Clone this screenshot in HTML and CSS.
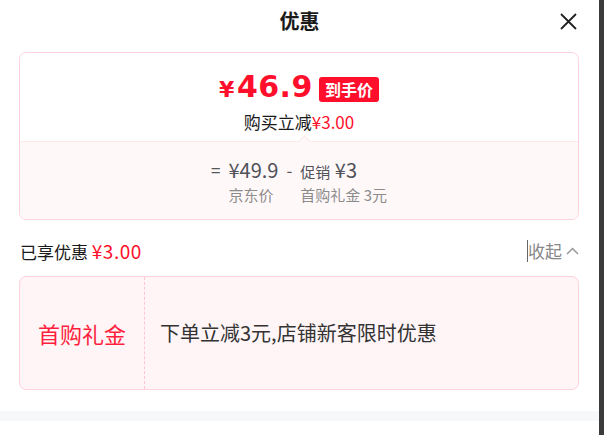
FILE: index.html
```html
<!DOCTYPE html>
<html lang="zh-CN">
<head>
<meta charset="utf-8">
<title>优惠</title>
<link rel="stylesheet" href="styles.css">
</head>
<body>
<div class="page">
  <header class="header">
    <span></span>
    <h1 class="title">优惠</h1>
    <span class="close">
      <svg width="17" height="17" viewBox="0 0 17 17"><path d="M1 1L16 16M16 1L1 16" stroke="#222" stroke-width="1.8" fill="none"/></svg>
    </span>
  </header>

  <section class="card">
    <div class="card-top">
      <div class="price-row">
        <span class="price"><span class="yen">¥</span>46.9</span>
        <span class="badge">到手价</span>
      </div>
      <div class="reduce">购买立减<span class="red">¥3.00</span></div>
      <span class="notch"></span>
    </div>
    <div class="card-bottom">
      <div class="calc">
        <span class="op">=</span>
        <span class="num">¥49.9</span>
        <span class="op">-</span>
        <span class="num"><span class="small">促销</span> ¥3</span>
        <span></span>
        <span class="label">京东价</span>
        <span></span>
        <span class="label">首购礼金 3元</span>
      </div>
    </div>
  </section>

  <div class="enjoy">
    <div class="enjoy-left">已享优惠 <span class="red big">¥3.00</span></div>
    <div class="fold">收起
      <svg width="13" height="8" viewBox="0 0 13 8"><path d="M1 7L6.5 1.5L12 7" stroke="#999" stroke-width="1.5" fill="none"/></svg>
    </div>
  </div>

  <section class="coupon">
    <div class="coupon-name">首购礼金</div>
    <div class="coupon-desc">下单立减3元,店铺新客限时优惠</div>
  </section>

  <div class="strip"></div>
</div>
<div class="gutter"></div>
</body>
</html>
```
FILE: styles.css
```css
html, body {
  margin: 0;
  padding: 0;
}
body {
  display: flex;
  width: 604px;
  height: 435px;
  overflow: hidden;
  background: #fff;
  font-family: "Noto Sans CJK SC", "Noto Sans", sans-serif;
  color: #1a1a1a;
}
.page {
  width: 599px;
  display: flex;
  flex-direction: column;
}
.gutter {
  width: 5px;
  background: #3b3b3b;
}
.header {
  height: 42px;
  display: grid;
  grid-template-columns: 1fr auto 1fr;
  align-items: center;
}
.title {
  margin: 0;
  font-size: 20px;
  font-weight: 700;
  line-height: 42px;
  color: #1a1a1a;
}
.close {
  justify-self: end;
  margin-right: 22px;
  display: flex;
}
.card {
  margin: 10px 20px 0 19px;
  border: 1px solid #ffd3de;
  border-radius: 7px;
  overflow: hidden;
}
.card-top {
  position: relative;
  height: 88px;
  padding-top: 15px;
  box-sizing: border-box;
  display: flex;
  flex-direction: column;
  align-items: center;
}
.price-row {
  height: 40px;
  display: flex;
  align-items: center;
  gap: 6px;
}
.price {
  font-family: "DejaVu Sans", sans-serif;
  font-weight: 700;
  font-size: 30px;
  color: #ff0f2b;
  line-height: 40px;
  letter-spacing: 0.5px;
}
.yen {
  font-size: 22px;
  margin-right: 2px;
}
.badge {
  background: #ff0f2b;
  color: #fff;
  font-size: 16px;
  font-weight: 700;
  line-height: 25px;
  height: 25px;
  padding: 0 6px;
  border-radius: 3px;
  margin-top: 2px;
}
.reduce {
  margin-top: 3px;
  font-size: 17px;
  line-height: 22px;
  color: #1a1a1a;
}
.red {
  color: #ff0f2b;
}
.notch {
  position: absolute;
  left: 280px;
  bottom: -5px;
  width: 8px;
  height: 8px;
  background: #fff8f9;
  border-top: 1px solid #fde8ec;
  border-left: 1px solid #fde8ec;
  transform: rotate(45deg);
}
.card-bottom {
  height: 78px;
  box-sizing: border-box;
  border-top: 1px solid #fde8ec;
  background: #fff8f9;
  padding-top: 16px;
}
.calc {
  display: grid;
  grid-template-columns: auto auto auto auto;
  justify-content: center;
  column-gap: 8px;
  row-gap: 1px;
}
.op {
  font-size: 17px;
  line-height: 24px;
  color: #555;
}
.num {
  font-size: 20px;
  line-height: 24px;
  color: #505259;
  font-weight: 400;
}
.small {
  font-size: 15px;
}
.label {
  font-size: 15px;
  line-height: 20px;
  color: #8c8c8c;
}
.enjoy {
  margin: 20px 20px 14px 20px;
  height: 22px;
  display: flex;
  justify-content: space-between;
  align-items: center;
}
.enjoy-left {
  font-size: 17px;
  line-height: 22px;
  color: #1a1a1a;
}
.big {
  font-size: 19px;
  letter-spacing: 0.5px;
}
.fold {
  display: flex;
  align-items: center;
  gap: 4px;
  font-size: 17px;
  line-height: 22px;
  color: #888;
  border-left: 1px solid #666;
}
.coupon {
  margin: 0 20px 0 19px;
  height: 114px;
  box-sizing: border-box;
  border: 1px solid #ffd3de;
  border-radius: 7px;
  background: #fff5f7;
  display: flex;
  align-items: center;
}
.coupon-name {
  width: 125px;
  height: 100%;
  box-sizing: border-box;
  border-right: 1px dashed #ffc6d2;
  display: flex;
  align-items: center;
  justify-content: center;
  font-size: 22px;
  color: #ff1f3d;
}
.coupon-desc {
  padding-left: 15px;
  font-size: 20px;
  color: #333;
  line-height: 28px;
}
.strip {
  margin-top: 21px;
  height: 10px;
  background: #f7f8fa;
}
```
